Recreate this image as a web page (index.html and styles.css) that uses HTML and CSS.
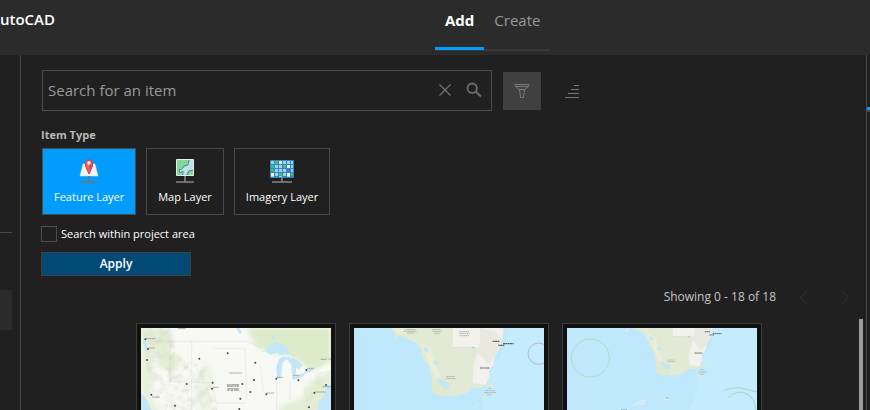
FILE: index.html
```html
<!DOCTYPE html>
<html lang="en">
<head>
<meta charset="utf-8">
<meta name="viewport" content="width=device-width, initial-scale=1">
<title>Add layers</title>
<link rel="stylesheet" href="styles.css">
</head>
<body>
<header class="topbar">
  <div class="product">utoCAD</div>
  <nav class="tabs">
    <a class="tab tab-active" href="#add">Add</a>
    <a class="tab" href="#create">Create</a>
  </nav>
</header>
<div class="workspace">
  <aside class="side-left">
    <div class="side-rule"></div>
    <div class="side-item"></div>
  </aside>
  <main class="panel">
    <form class="filters">
      <div class="search-row">
        <div class="search-box">
          <input class="search-input" type="text" placeholder="Search for an item" aria-label="Search for an item">
          <button class="icon-button" type="button" aria-label="Clear">
            <svg width="14" height="14" viewBox="0 0 14 14"><path d="M1.5 1.5l11 11M12.5 1.5l-11 11" stroke="#757575" stroke-width="1.1" fill="none"/></svg>
          </button>
          <button class="icon-button" type="button" aria-label="Search">
            <svg width="16" height="16" viewBox="0 0 16 16"><circle cx="6.2" cy="6.2" r="4.7" stroke="#6e6e6e" stroke-width="1.8" fill="none"/><path d="M9.6 9.6l5.3 5" stroke="#6e6e6e" stroke-width="2" fill="none"/></svg>
          </button>
        </div>
        <button class="filter-button" type="button" aria-label="Filter">
          <svg width="16" height="16" viewBox="0 0 16 16"><path d="M1 1.5h14v1.2L11 6.5H5L1 2.700zM1.500 3.500h13M5.500 6.500l1 8h3l1-8" stroke="#7b7b7b" fill="none"/></svg>
        </button>
        <button class="sort-button" type="button" aria-label="Sort">
          <svg width="14" height="14" viewBox="0 0 14 14"><path d="M9 1.500h5M6 5.500h8M3 9.500h11M0 13.500h14" stroke="#777" fill="none"/></svg>
        </button>
      </div>
      <h2 class="filter-title">Item Type</h2>
      <div class="types">
        <button class="type type-active" type="button">
          <svg width="24" height="24" viewBox="0 0 24 24"><path d="M6 5h12l3 12H3z" fill="#f3f3f3" stroke="#d6e0e5" stroke-width=".5"/><path d="M12 15L8.500 7V3.500L10 1h4L15.500 3.500V7z" fill="#e66568" stroke="#c83f49"/><path d="M12.500 3v10l2-6V3z" fill="#c94950"/><circle cx="12" cy="4" r="1.700" fill="#fff"/><path d="M12 17v6M3 23h18" stroke="#69757b" stroke-width="1.600"/></svg>
          Feature Layer
        </button>
        <button class="type" type="button">
          <svg width="24" height="24" viewBox="0 0 24 24"><path d="M3.500.5h17v16h-17z" fill="#83d79d" stroke="#e9eeeb"/><path d="M16 1h4v10l-5 1-2 4h-3v-4l-3 1v-3l7-4z" fill="#c2dcf7"/><path d="M16 1l-1 5-4 1-2 3-3 1 1 3 3-2v4M20 11l-4 1-2 4" stroke="#379d66" fill="none"/><path d="M12 17v6M3 23h18" stroke="#858585" stroke-width="1.600"/></svg>
          Map Layer
        </button>
        <button class="type" type="button">
          <svg width="24" height="24" viewBox="0 0 24 24"><rect y="1" width="24" height="18" rx="1" fill="#3685bd"/><g fill="#9ed0f4"><path d="M1 2h3v3H1zM9 2h3v3H9zM13 2h3v3h-3zM17 2h3v3h-3zM21 2h2v3h-2zM5 6h3v3H5zM9 6h3v3H9zM21 6h2v3h-2zM5 10h3v3H5zM9 10h3v3H9zM13 10h3v3h-3zM21 10h2v3h-2zM5 14h3v3H5zM13 14h3v3h-3zM1 17h3v1H1zM9 17h3v1H9zM17 17h3v1h-3z"/></g><path d="M5 2h3v3H5zM1 10h3v3H1zM9 14h3v3H9zM21 14h2v3h-2zM13 6h3v3h-3z" fill="#49b978"/><path d="M1 6h3v3H1z" fill="#26c897"/><path d="M9 2h3v3H9zM17 6h3v3h-3zM1 14h3v3H1zM17 14h3v3h-3z" fill="#eef5ef"/><path d="M12 19v4M2 23h20" stroke="#858585" stroke-width="1.600"/></svg>
          Imagery Layer
        </button>
      </div>
      <label class="check"><input class="check-box" type="checkbox"><span>Search within project area</span></label>
      <button class="apply" type="button">Apply</button>
    </form>
    <div class="pager">
      <span>Showing 0 - 18 of 18</span>
      <div class="pager-buttons">
        <button class="icon-button" type="button" aria-label="Previous page"><svg width="8" height="15" viewBox="0 0 8 15"><path d="M7.500.5l-7 7 7 7" stroke="#303030" fill="none"/></svg></button>
        <button class="icon-button" type="button" aria-label="Next page"><svg width="8" height="15" viewBox="0 0 8 15"><path d="M.5.5l7 7-7 7" stroke="#303030" fill="none"/></svg></button>
      </div>
    </div>
    <section class="results">
      <div class="cards">
        <article class="card">
          <svg class="map" viewBox="33 39 570 390">
            <defs>
              <filter id="soft" x="-20%" y="-20%" width="140%" height="140%"><feGaussianBlur stdDeviation="7"/></filter>
              <filter id="relief" x="0" y="0" width="100%" height="100%"><feTurbulence type="fractalNoise" baseFrequency=".045" numOctaves="3" seed="7"/><feColorMatrix values="0 0 0 0 .63  0 0 0 0 .64  0 0 0 0 .56  1.800 0 0 0 -.75"/><feComposite in2="SourceGraphic" operator="in"/></filter>
            </defs>
            <path d="M33 39h570v390H33z" fill="#f8f9f5"/>
            <g fill="#e4eed5" filter="url(#soft)">
              <path d="M33 39h87l10 38-12 25 38 35-22 33-42-13-18-47-38-4z"/>
              <path d="M33 100l35-6 5 85-12 60 35 64H55L33 220z" opacity=".8"/>
              <path d="M350 39h253v100l-58 28-25-20-30-22-48-8-60-18-20-35z" fill="#dcebc9"/>
              <path d="M603 170l-60 28-32 55-60 20-20 60h110l62-110z"/>
              <path d="M225 140l30 35-15 75 20 50-50-15-15-70z" opacity=".5"/>
            </g>
            <path d="M33 39h90l35 95 80 25 15 90 15 60H100L60 210z" fill="#fff" filter="url(#relief)" opacity=".7"/>
            <path d="M520 220l45-48 38-5v120h-70z" fill="#fff" filter="url(#relief)" opacity=".4"/>
            <g fill="#c3e6f9">
              <path d="M33 232l20 25 11 28 20 30 10 114H33z"/>
              <path d="M603 203l-14 14-7 25-16 20-5 45 42 20z"/>
              <path d="M388 113l20-9 14-17 23-5 27 18 16 20-20-4-13 4-14-7-19 7-17-12z"/>
              <path d="M441 187l-2-31 8-24 13-8 14 6-16 12-4 42-6 8zM474 126l26 7 17 17-10 15-8-8-4 28-9 1-2-35-14-19zM484 189l28-12 12-2-4 9-30 11zM519 174l18-13 17 1-12 9z"/>
              <path d="M424 62l8-5 2 15-7 4zM318 39l10 18 8-5-8-13zM40 65l8 20 8 22-6 1-11-20z"/>
            </g>
            <path d="M65 79h288l38 18M490 120l7 58-5 15M522 179l16-14 32-12 30-33M120 79v120l130 5M185 79v230M250 100h90M248 204l10 60h90M345 100l5 150M390 150l10 80M440 200v100M480 195v60" stroke="#c5c4cc" stroke-width="1.300" fill="none" opacity=".65"/>
            <g fill="#3e4649"><circle cx="46" cy="73" r="3"/><circle cx="54" cy="102" r="3"/><circle cx="51" cy="135" r="3"/><circle cx="208" cy="131" r="3"/><circle cx="293" cy="115" r="3"/><circle cx="376" cy="143" r="3"/><circle cx="372" cy="195" r="3"/><circle cx="248" cy="203" r="3"/><circle cx="246" cy="221" r="3"/><circle cx="337" cy="207" r="3"/><circle cx="361" cy="231" r="3"/><circle cx="331" cy="251" r="3"/><circle cx="409" cy="238" r="3"/><circle cx="439" cy="191" r="3"/><circle cx="505" cy="196" r="3"/><circle cx="529" cy="165" r="3"/><circle cx="64" cy="239" r="3"/><circle cx="135" cy="272" r="3"/><circle cx="170" cy="207" r="3"/><circle cx="328" cy="282" r="3"/><circle cx="553" cy="234" r="3"/><circle cx="588" cy="210" r="3"/><circle cx="537" cy="277" r="3"/></g>
            <path d="M48 71h27M56 99h19M66 246h24M249 217h18M410 234h22M441 187h19M490 181h18M531 160h20M572 133h18M596 132h8M555 231h32M578 215h24M297 174h38M145 41h22" stroke="#747b7b" stroke-width="2" stroke-dasharray="5 1"/>
            <g class="country"><text x="309" y="215">UNITED</text><text x="309" y="228">STATES</text></g>
          </svg>
        </article>
        <article class="card">
          <svg class="map" viewBox="43 39 570 390">
            <defs>
              <g id="peninsula">
                <path d="M-100 -40h900v700H-100z" fill="#bfe8fd"/>
                <path d="M510 0q-5 90-45 150t-35 120-60 150v240h430V0z" fill="#c5ebfe"/>
                <path d="M155 35l10 24 3 15 12-13 51 24 12 20 7 28 17 20 6 25 6 24-3 13 5 20 23 7 27-1 17 3 33-10 15-14 32-1 10-8 10-25-2-20 14-17 5-25 14-25 10-45V20z" fill="#e2ead5"/>
                <path d="M155 35h50l-5 20-28 3zM243 85l30 15 18 55 13 35-15-5-35-72z" fill="#ecefd8"/>
                <path d="M340 30h151v28l-11 42-14 25-5 25-14 17 2 18-11 24-38-5 1-46 10-60-72-2z" fill="#f2f1eb"/>
                <path d="M420 39l45 8 20 25-16 50-23 25-15-16-20-20 10-34z" fill="#e7e5dc" opacity=".7"/>
                <path d="M297 188l28 14 5 12-11 10-13-10-16-15zM252 94l14 7v14l-12-7zM280 135l16 5-2 12-12-4z" fill="#c5e7f4"/>
                <path d="M276 200l15-10 13 24 18 10 2 15-22 5-14-10-9-15zM447 205l17-4-4 15-10 4zM425 244l17-9 4 5-17 8z" fill="#dfe9cc"/>
                <path d="M340 97h59l4-3M411 99l-3 35" stroke="#c7c6b8" fill="none"/>
                <path d="M459 79h20M421 159h29M490 86h32M476 91h18" stroke="#59605d" stroke-width="3.500" stroke-dasharray="6 1"/>
                <path d="M195 44h33M191 49h40M202 54h22M278 44h27M279 50h26M284 56h15M359 50h30M358 56h32M360 62h28M396 98h10M320 185h26M318 191h32M444 220h12M436 227h29M434 233h35M443 239h13" stroke="#9b9f91" stroke-width="2" stroke-dasharray="5 1"/>
              </g>
            </defs>
            <use href="#peninsula"/>
            <circle cx="597" cy="116" r="32" fill="none" stroke="#b8b4dc" stroke-width="3"/>
            <path d="M398 280l10-5M406 272l12-7" stroke="#e4ece2" stroke-width="3"/>
          </svg>
        </article>
        <article class="card">
          <svg class="map" viewBox="36 39 570 390">
            <use href="#peninsula" transform="translate(82 -13) scale(.8)"/>
            <circle cx="106" cy="129" r="57" fill="none" stroke="#aedbc5" stroke-width="3"/>
            <path d="M506 227q20-10 48-9l52 13M520 248q26-25 55-12t26 60" fill="none" stroke="#a6d7c0" stroke-width="3"/>
            <path d="M233 272l14-7M244 264l15-4 5-8M253 268l17-4M265 258l8-2M328 249l10-2 4 5-9 3zM210 47h8" stroke="#e9f1ee" stroke-width="3" fill="none"/>
            <path d="M198 284h18M330 249h12" stroke="#8d9b8f" stroke-width="2"/>
          </svg>
        </article>
      </div>
      <div class="scrollbar"></div>
    </section>
  </main>
  <aside class="side-right"><div class="side-mark"></div></aside>
</div>
</body>
</html>
```

FILE: styles.css
```css
* {
  box-sizing: border-box;
}

body {
  margin: 0;
  height: 100vh;
  overflow: hidden;
  display: flex;
  flex-direction: column;
  background: #202020;
  color: #fff;
  font: 11px/16px "Open Sans", "Noto Sans", sans-serif;
}

button {
  padding: 0;
  border: 0;
  background: none;
  color: inherit;
  font: inherit;
}

svg {
  display: block;
}

.topbar {
  flex: none;
  display: grid;
  grid-template-columns: 1fr 1fr;
  height: 55px;
  background: #2b2b2b;
}

.product {
  padding-top: 8px;
  font-size: 15px;
  font-weight: 600;
  line-height: 22px;
}

.tabs {
  display: flex;
  justify-self: start;
  height: 51px;
  border-bottom: 2px solid #383838;
}

.tab {
  height: 50px;
  padding: 9px 10px 0;
  border-bottom: 3px solid transparent;
  color: #999;
  font-size: 15px;
  line-height: 22px;
  text-decoration: none;
}

.tab-active {
  border-color: #009dff;
  color: #fff;
  font-weight: 700;
}

.workspace {
  flex: 1;
  min-height: 0;
  display: flex;
}

.side-left {
  flex: none;
  width: 21px;
  padding-top: 177px;
  border-right: 1px solid #4a4a4a;
}

.side-rule {
  width: 12px;
  height: 1px;
  background: #4a4a4a;
}

.side-item {
  width: 12px;
  height: 40px;
  margin-top: 57px;
  background: #2b2b2b;
}

.panel {
  flex: 1;
  min-width: 0;
  display: flex;
  flex-direction: column;
}

.filters {
  padding: 15px 20px 0;
}

.search-row {
  display: flex;
  align-items: center;
  margin-left: 1px;
}

.search-box {
  display: flex;
  align-items: center;
  gap: 14px;
  width: 450px;
  height: 41px;
  padding: 0 9px 2px 5px;
  border: 1px solid #4d4d4d;
}

.search-input {
  flex: 1;
  min-width: 0;
  padding: 0;
  border: 0;
  outline: 0;
  background: none;
  color: #fff;
  font: 15px/22px "Open Sans", "Noto Sans", sans-serif;
}

.search-input::placeholder {
  color: #999;
  opacity: 1;
}

.filter-button {
  display: grid;
  place-items: center;
  width: 38px;
  height: 38px;
  margin-left: 11px;
  background: #404040;
}

.sort-button {
  margin-left: 24px;
}

.filter-title {
  margin: 16px 0 5px;
  color: #b8b8b8;
  font-size: 11px;
  font-weight: 700;
  line-height: 16px;
}

.types {
  display: flex;
  gap: 10px;
  margin-left: 1px;
}

.type {
  display: flex;
  flex-direction: column;
  align-items: center;
  gap: 6px;
  height: 67px;
  padding: 10px 11px 0;
  border: 1px solid #4a4a4a;
}

.type-active {
  background: #009dff;
}

.check {
  display: flex;
  align-items: center;
  gap: 4px;
  width: max-content;
  margin-top: 11px;
}

.check-box {
  appearance: none;
  width: 16px;
  height: 16px;
  margin: 0;
  border: 1px solid #4d4d4d;
}

.apply {
  display: block;
  width: 150px;
  height: 24px;
  margin-top: 10px;
  border: 1px solid #404040;
  background: #004a75;
  font-size: 12px;
  font-weight: 600;
}

.pager {
  display: flex;
  justify-content: flex-end;
  align-items: center;
  gap: 24px;
  margin-top: 13px;
  padding-right: 17px;
  color: #c4c4c4;
  font-size: 12px;
}

.pager-buttons {
  display: flex;
  gap: 33px;
}

.results {
  flex: 1;
  min-height: 0;
  display: flex;
  margin-top: 14px;
  padding-right: 3px;
}

.cards {
  flex: 1;
  display: flex;
  justify-content: center;
  align-items: flex-start;
  gap: 13px;
  padding: 4px 0 0 18px;
  overflow: hidden;
}

.card {
  flex: none;
  width: 200px;
  padding: 4px;
  border: 1px solid #3c3c3c;
  background: #111;
}

.map {
  width: 100%;
  height: auto;
}

.country {
  fill: #6f7473;
  font-size: 10px;
  font-weight: 700;
  text-anchor: middle;
}

.scrollbar {
  width: 4px;
  background: #9c9c9c;
}

.side-right {
  flex: none;
  width: 4px;
  padding-top: 52px;
  border-left: 1px solid #4a4a4a;
}

.side-mark {
  height: 5px;
  border-top: 3px solid #009dff;
  background: #4a4a4a;
}
```
